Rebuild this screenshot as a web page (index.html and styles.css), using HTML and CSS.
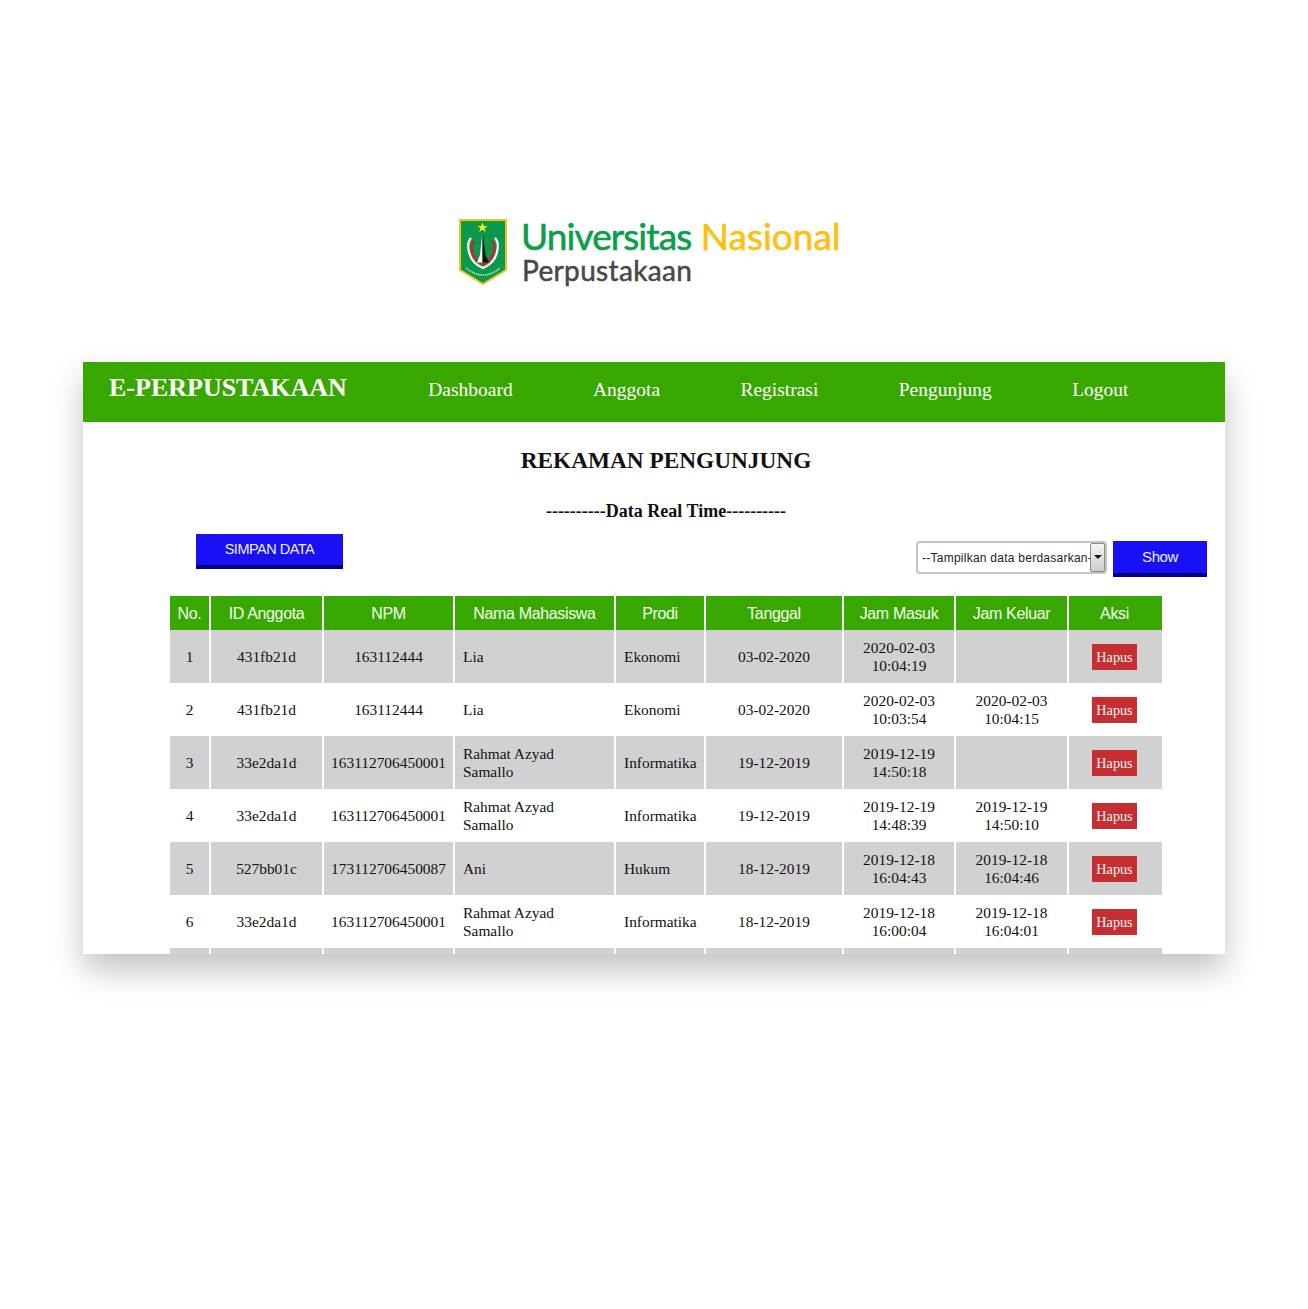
FILE: index.html
```html
<!DOCTYPE html>
<html lang="id">
<head>
<meta charset="utf-8">
<title>E-Perpustakaan</title>
<link rel="stylesheet" href="styles.css">
</head>
<body>
<header class="logo">
  <svg class="crest" width="48" height="66" viewBox="0 0 48 66" aria-hidden="true">
    <path d="M1 1H47V51L24 65L1 51Z" fill="#0b9a4b" stroke="#f6c21a" stroke-width="2"/>
    <path d="M23.500 3.500l1.400 3.500h3.700l-3 2.300 1.200 3.700-3.300-2.200-3.300 2.200 1.200-3.700-3-2.300h3.700z" fill="#f8e71c"/>
    <path d="M12 19C8 23 9 29 10 33C12 42 19 47 24 49C29 47 36 42 38 33C39 29 40 23 36 19" fill="none" stroke="#fff" stroke-width="2.200"/>
    <path d="M15 22C12 25 12.500 30 13.500 34C15 40 20 43.500 24 45C28 43.500 33 40 34.500 34C35.500 30 36 25 33 22" fill="none" stroke="#d3222a" stroke-width="2.600"/>
    <path d="M23.500 12L21 36L18 43.500H23.500Z" fill="#fff"/>
    <path d="M23.500 12L26.500 36L30 43.500H23.500Z" fill="#111"/>
    <path d="M7 49Q24 63 41 49" fill="none" stroke="#cfe8c8" stroke-width="1.500" stroke-dasharray="1.500 .8"/>
  </svg>
  <div class="logo-text">
    <div class="logo-name"><span class="logo-green">Universitas</span> <span class="logo-yellow">Nasional</span></div>
    <div class="logo-sub">Perpustakaan</div>
  </div>
</header>

<main class="card">
  <nav class="navbar">
    <span class="brand">E-PERPUSTAKAAN</span>
    <a class="nav-link">Dashboard</a>
    <a class="nav-link">Anggota</a>
    <a class="nav-link">Registrasi</a>
    <a class="nav-link">Pengunjung</a>
    <a class="nav-link">Logout</a>
  </nav>

  <div class="headings">
    <h1 class="title">REKAMAN PENGUNJUNG</h1>
    <h2 class="subtitle">----------Data Real Time----------</h2>
  </div>

  <div class="toolbar">
    <button class="btn btn-save">SIMPAN DATA</button>
    <div class="filter">
      <div class="select-wrap">
        <select class="select"><option>--Tampilkan data berdasarkan--</option></select>
        <span class="select-arrow"></span>
      </div>
      <button class="btn btn-show">Show</button>
    </div>
  </div>

  <table class="records">
    <colgroup>
      <col class="c1"><col class="c2"><col class="c3"><col class="c4"><col class="c5"><col class="c6"><col class="c7"><col class="c8"><col class="c9">
    </colgroup>
    <thead>
      <tr><th>No.</th><th>ID Anggota</th><th>NPM</th><th>Nama Mahasiswa</th><th>Prodi</th><th>Tanggal</th><th>Jam Masuk</th><th>Jam Keluar</th><th>Aksi</th></tr>
    </thead>
    <tbody>
      <tr><td>1</td><td>431fb21d</td><td>163112444</td><td class="left">Lia</td><td class="left">Ekonomi</td><td>03-02-2020</td><td>2020-02-03<br>10:04:19</td><td></td><td><a class="hapus">Hapus</a></td></tr>
      <tr><td>2</td><td>431fb21d</td><td>163112444</td><td class="left">Lia</td><td class="left">Ekonomi</td><td>03-02-2020</td><td>2020-02-03<br>10:03:54</td><td>2020-02-03<br>10:04:15</td><td><a class="hapus">Hapus</a></td></tr>
      <tr><td>3</td><td>33e2da1d</td><td>163112706450001</td><td class="left">Rahmat Azyad<br>Samallo</td><td class="left">Informatika</td><td>19-12-2019</td><td>2019-12-19<br>14:50:18</td><td></td><td><a class="hapus">Hapus</a></td></tr>
      <tr><td>4</td><td>33e2da1d</td><td>163112706450001</td><td class="left">Rahmat Azyad<br>Samallo</td><td class="left">Informatika</td><td>19-12-2019</td><td>2019-12-19<br>14:48:39</td><td>2019-12-19<br>14:50:10</td><td><a class="hapus">Hapus</a></td></tr>
      <tr><td>5</td><td>527bb01c</td><td>173112706450087</td><td class="left">Ani</td><td class="left">Hukum</td><td>18-12-2019</td><td>2019-12-18<br>16:04:43</td><td>2019-12-18<br>16:04:46</td><td><a class="hapus">Hapus</a></td></tr>
      <tr><td>6</td><td>33e2da1d</td><td>163112706450001</td><td class="left">Rahmat Azyad<br>Samallo</td><td class="left">Informatika</td><td>18-12-2019</td><td>2019-12-18<br>16:00:04</td><td>2019-12-18<br>16:04:01</td><td><a class="hapus">Hapus</a></td></tr>
      <tr><td></td><td></td><td></td><td></td><td></td><td></td><td></td><td></td><td></td></tr>
    </tbody>
  </table>
</main>
</body>
</html>
```
FILE: styles.css
```css
* { box-sizing: border-box; }
html, body { margin: 0; background: #fff; }
body { font-family: "Liberation Serif", serif; color: #111; overflow: hidden; height: 1309px; }

.logo { display: flex; gap: 14px; padding: 219px 0 0 459px; height: 362px; }
.crest { display: block; flex: none; }
.logo-text { font-family: Lato, sans-serif; margin-top: -2px; }
.logo-name { font-size: 37px; line-height: 38px; -webkit-text-stroke: .6px currentColor; white-space: nowrap; }
.logo-green { color: #0c9e4b; letter-spacing: -.9px; }
.logo-yellow { color: #fdc010; letter-spacing: 0; }
.logo-sub { font-size: 28px; line-height: 30px; color: #48484a; margin-left: 1px; letter-spacing: .35px; -webkit-text-stroke: .5px currentColor; }

.card { width: 1142px; height: 592px; margin-left: 83px; overflow: hidden; background: #fff; box-shadow: 0 16px 30px rgba(0, 0, 0, .24); }

.navbar { display: flex; align-items: center; gap: 80.300px; height: 59.500px; padding-left: 26px; background: #38a800; color: #fff; }
.brand { font-size: 26px; font-weight: bold; margin-top: -8px; margin-right: 1px; white-space: nowrap; }
.nav-link { font-size: 19.500px; margin-top: -4px; }

.headings { width: 992px; margin-left: 87px; text-align: center; }
.title { margin: 0; padding-top: 23.500px; font-size: 23.300px; line-height: 30px; font-weight: bold; color: #111; }
.subtitle { margin: 0; padding-top: 26px; font-size: 18px; line-height: 20px; font-weight: bold; color: #111; }

.toolbar { display: flex; justify-content: space-between; align-items: flex-start; padding: 13px 18px 0 113px; height: 75px; }
.btn { display: block; border: 0; padding: 0 0 2px; border-bottom: 4px solid #000080; background: #1a10f6; color: #eef; font-family: "Liberation Sans", sans-serif; font-size: 14.500px; letter-spacing: -.5px; }
.btn-save { width: 147px; height: 35px; }
.btn-show { width: 94px; height: 36px; font-size: 15px; letter-spacing: -.4px; }
.filter { display: flex; gap: 6px; padding-top: 7px; }
.select-wrap { position: relative; width: 191px; height: 33px; }
.select { appearance: none; display: block; width: 100%; height: 100%; padding: 0 15px 0 4px; border: 2px solid #c4c4c4; border-radius: 4px; background: #fff; color: #222; font-family: "Liberation Sans", sans-serif; font-size: 12px; letter-spacing: .25px; }
.select-arrow { position: absolute; top: 2px; right: 2px; width: 15px; height: 29px; background: linear-gradient(#f4f4f4, #cfcfcf); border: 1px solid #8a8a8a; border-radius: 2px; }
.select-arrow::after { content: ""; position: absolute; top: 11px; left: 3px; border: 4px solid transparent; border-top: 4px solid #111; }

.records { width: 992px; margin-left: 87px; table-layout: fixed; border-collapse: collapse; }
.c1 { width: 40px; } .c2 { width: 113px; } .c3 { width: 131px; } .c4 { width: 161px; } .c5 { width: 90px; } .c6 { width: 138px; } .c7 { width: 112px; } .c8 { width: 113px; } .c9 { width: 94px; }
.records th { height: 34px; padding: 2px 0 0; background: #38a800; color: #f4fff0; font-family: "Liberation Sans", sans-serif; font-size: 16px; letter-spacing: -.35px; font-weight: 400; border-left: 2px solid #fff; }
.records td { height: 53px; padding: 1px 0 0; font-size: 15.400px; line-height: 18px; text-align: center; border-left: 2px solid #fff; color: #111; }
.records th:first-child, .records td:first-child { border-left: 0; }
.records th:last-child, .records td:last-child { padding-right: 2px; }
.records td.left { text-align: left; padding-left: 8px; }
.records tbody tr:nth-child(odd) td { background: #d1d1d1; }
.hapus { display: inline-block; width: 45px; height: 26px; background: #c62f32; color: #f6f6f6; font-size: 14.200px; line-height: 26px; vertical-align: middle; }
```
